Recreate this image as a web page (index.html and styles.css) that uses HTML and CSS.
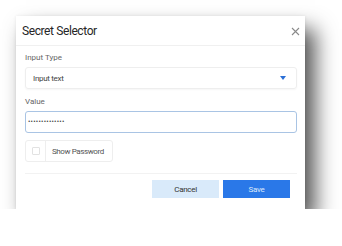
FILE: index.html
```html
<!DOCTYPE html>
<html lang="en">
<head>
    <meta charset="UTF-8">
    <meta name="viewport" content="width=device-width, initial-scale=1.0">
    <title>Secret Selector</title>
    <link rel="stylesheet" href="styles.css">
</head>
<body>

    <div class="dialog">
        <!-- HEADER -->
        <header class="dialog-header">
            <span class="dialog-title">Secret Selector</span>
            <svg class="close-icon" width="9" height="9" viewBox="0 0 9 9">
                <path d="M1 1 L8 8 M8 1 L1 8" stroke="#8a8a8a" stroke-width="1.1" fill="none"/>
            </svg>
        </header>

        <!-- BODY -->
        <main class="dialog-body">
            <div class="field-label">Input Type</div>
            <div class="select-box">
                <span>Input text</span>
                <span class="select-arrow"></span>
            </div>

            <div class="field-label value-label">Value</div>
            <div class="text-box">
                <span class="dots">••••••••••••••</span>
            </div>

            <div class="check-group">
                <div class="check-cell"><span class="check-square"></span></div>
                <span class="check-text">Show Password</span>
            </div>
        </main>

        <!-- FOOTER -->
        <footer class="dialog-footer">
            <button class="btn cancel-button">Cancel</button>
            <button class="btn save-button">Save</button>
        </footer>
    </div>

</body>
</html>
```

FILE: styles.css
```css
body, html {
    margin: 0;
    padding: 0;
    background-color: white;
    font-family: Roboto, 'Liberation Sans', sans-serif;
    color: #333;
}

.dialog {
    margin: 16px 0 0 16px;
    width: 289px;
    height: 193px;
    background-color: white;
    box-shadow: 10px 13px 20px rgba(0, 0, 0, 0.68), 0 0 3px rgba(0, 0, 0, 0.08);
    display: flex;
    flex-direction: column;
}

.dialog-header {
    height: 29px;
    display: flex;
    align-items: center;
    justify-content: space-between;
    padding: 0 5px 0 6px;
    border-bottom: 1px solid #f0f0f0;
}

.dialog-title {
    font-size: 12px;
    font-weight: 400;
    letter-spacing: -0.4px;
    color: #262626;
    padding-top: 1px;
}

.close-icon {
    margin-top: 1px;
}

.dialog-body {
    padding: 5px 8px 0 9px;
}

.field-label {
    font-size: 8px;
    color: #666;
    line-height: 14px;
    margin-bottom: 2px;
}

.value-label {
    margin-top: 6px;
}

.select-box {
    height: 20px;
    border: 1px solid #eeeeee;
    border-radius: 3px;
    box-shadow: 0 1px 2px rgba(0, 0, 0, 0.04);
    display: flex;
    align-items: center;
    justify-content: space-between;
    padding: 0 10px 0 7px;
    font-size: 8px;
    letter-spacing: -0.3px;
    color: #444;
}

.select-arrow {
    width: 0;
    height: 0;
    border-left: 3px solid transparent;
    border-right: 3px solid transparent;
    border-top: 4px solid #2b6fd6;
}

.text-box {
    height: 20px;
    border: 1px solid #a9c4e4;
    border-radius: 3px;
    display: flex;
    align-items: center;
    padding: 0 2px;
}

.dots {
    font-size: 7px;
    letter-spacing: 0.25px;
    color: #444;
}

.check-group {
    margin-top: 7px;
    width: 86px;
    height: 20px;
    border: 1px solid #eeeeee;
    border-radius: 3px;
    display: flex;
    align-items: center;
}

.check-cell {
    width: 19px;
    height: 100%;
    border-right: 1px solid #eeeeee;
    display: flex;
    align-items: center;
    justify-content: center;
}

.check-square {
    width: 6px;
    height: 6px;
    border: 1px solid #e2e2e2;
    border-radius: 1px;
}

.check-text {
    font-size: 8px;
    letter-spacing: -0.4px;
    color: #555;
    padding-left: 6px;
    white-space: nowrap;
}

.dialog-footer {
    margin: 11px 8px 0 9px;
    padding: 6px 7px 0 0;
    border-top: 1px solid #f2f2f2;
    display: flex;
    justify-content: flex-end;
    gap: 4px;
}

.btn {
    width: 67px;
    height: 18px;
    border: none;
    border-radius: 0;
    font-family: Roboto, 'Liberation Sans', sans-serif;
    font-size: 8px;
    letter-spacing: -0.3px;
    padding: 0;
}

.cancel-button {
    background-color: #d9eafa;
    color: #333;
}

.save-button {
    background-color: #2a78e8;
    color: #dce8fb;
}
```
